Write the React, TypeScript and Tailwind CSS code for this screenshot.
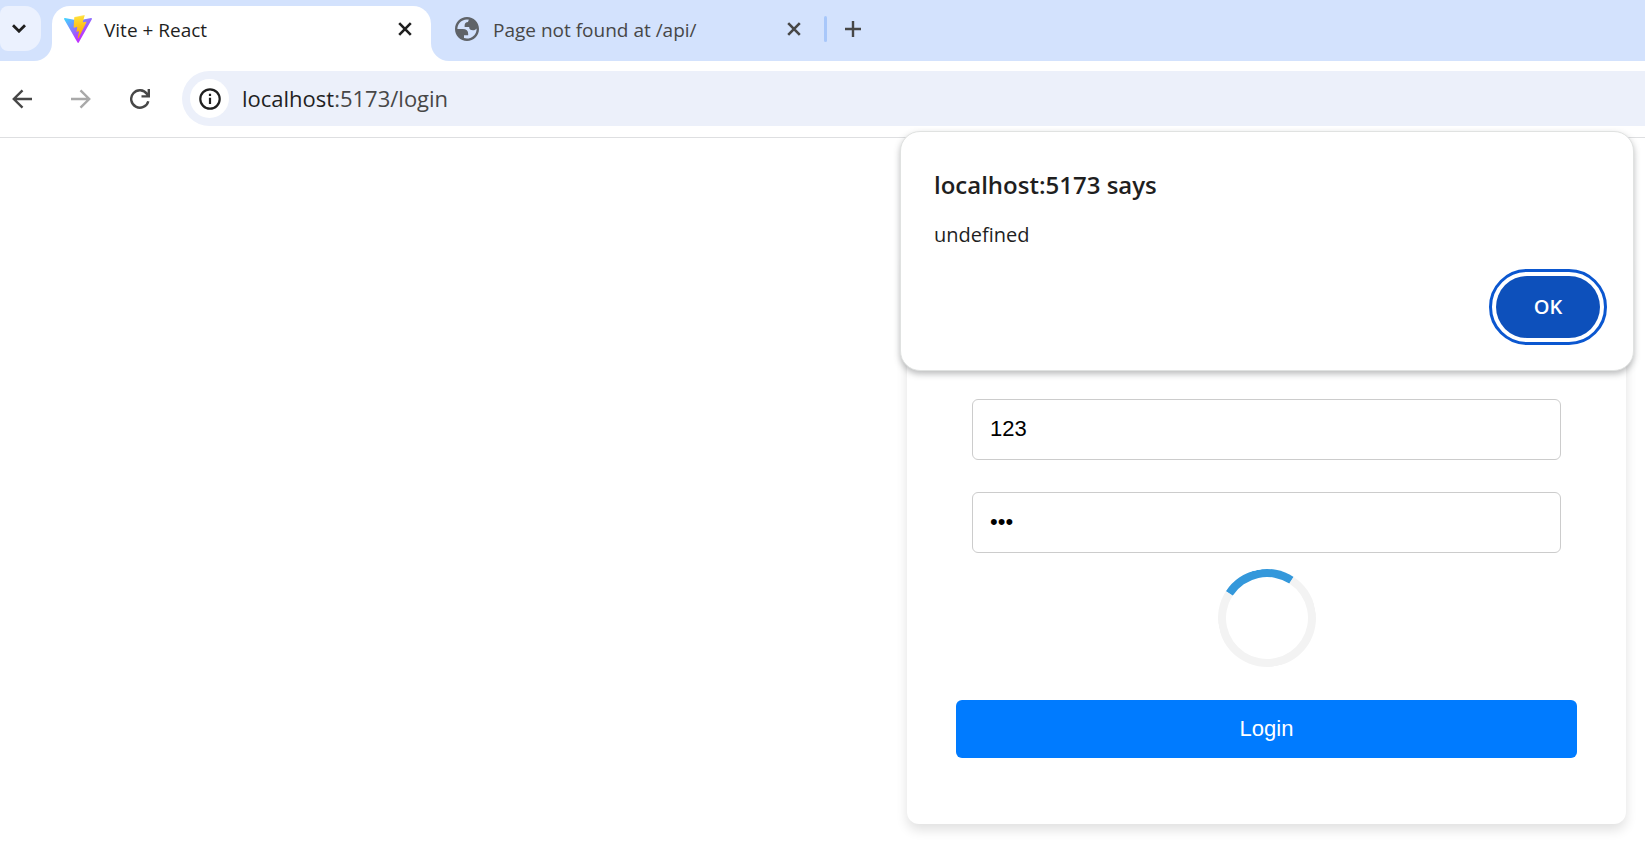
import type { ReactNode } from "react";

function CloseIcon() {
  return (
    <svg width="14" height="14" viewBox="0 0 14 14" fill="none" stroke="currentColor" strokeWidth="2.6">
      <path d="M1.2 1.2 12.8 12.8M12.8 1.2 1.2 12.8" />
    </svg>
  );
}

function ViteIcon() {
  return (
    <svg width="28" height="28" viewBox="0 0 256 257" className="shrink-0">
      <defs>
        <linearGradient id="viteBody" x1="-.828%" x2="57.636%" y1="7.652%" y2="78.411%">
          <stop offset="0%" stopColor="#41D1FF" />
          <stop offset="100%" stopColor="#BD34FE" />
        </linearGradient>
        <linearGradient id="viteBolt" x1="43.376%" x2="50.316%" y1="2.242%" y2="89.03%">
          <stop offset="0%" stopColor="#FFEA83" />
          <stop offset="8.333%" stopColor="#FFDD35" />
          <stop offset="100%" stopColor="#FFA800" />
        </linearGradient>
      </defs>
      <path
        fill="url(#viteBody)"
        d="M255.153 37.938 134.897 252.976c-2.483 4.44-8.862 4.466-11.382.048L.875 37.958c-2.746-4.814 1.371-10.646 6.827-9.67l120.385 21.517a6.537 6.537 0 0 0 2.322-.004l117.867-21.483c5.438-.991 9.574 4.796 6.877 9.62Z"
      />
      <path
        fill="url(#viteBolt)"
        d="M185.432.063 96.44 17.501a3.268 3.268 0 0 0-2.634 3.014l-5.474 92.456a3.268 3.268 0 0 0 3.997 3.378l24.777-5.718c2.318-.535 4.413 1.507 3.936 3.838l-7.361 36.047c-.495 2.426 1.782 4.5 4.151 3.78l15.304-4.649c2.372-.72 4.652 1.36 4.15 3.788l-11.698 56.621c-.732 3.542 3.979 5.473 5.943 2.437l1.313-2.028 72.516-144.72c1.215-2.423-.88-5.186-3.54-4.672l-25.505 4.922c-2.396.462-4.435-1.77-3.759-4.114l16.646-57.705c.677-2.35-1.37-4.583-3.769-4.113Z"
      />
    </svg>
  );
}

function GlobeIcon() {
  return (
    <svg width="24" height="24" viewBox="2 2 20 20" className="shrink-0" fill="#5f6368">
      <path
        fillRule="evenodd"
        d="M12 2C6.48 2 2 6.48 2 12s4.48 10 10 10 10-4.48 10-10S17.52 2 12 2zM4 12h4.4c3.407.022 4.922 1.73 4.543 5.127H9.488v2.470a8.004 8.004 0 0 0 10.498-8.083C19.327 12.504 18.332 13 17 13c-2.137 0-3.206-.916-3.206-2.750h-3.748c-.274-2.728.683-4.092 2.870-4.092 0-.975.327-1.597.811-1.970A8.004 8.004 0 0 0 4 12z"
      />
    </svg>
  );
}

function ArrowIcon({ forward = false }: { forward?: boolean }) {
  return (
    <svg width="20" height="20" viewBox="0 0 20 20" fill="none" stroke="currentColor" strokeWidth="2.4">
      {forward ? <path d="M0 10H18M9.5 1.3 18.2 10 9.5 18.7" /> : <path d="M20 10H2M10.5 1.3 1.8 10 10.5 18.7" />}
    </svg>
  );
}

function ReloadIcon() {
  return (
    <svg width="20" height="20" viewBox="0 0 20 20" fill="none" stroke="currentColor" strokeWidth="2.4">
      <path d="M18.3 12.2A8.7 8.7 0 1 1 17 5L18.4 7.2M18.8 0V7.4H11.5" />
    </svg>
  );
}

function InfoIcon() {
  return (
    <svg width="22" height="22" viewBox="0 0 22 22" fill="none" stroke="#1f1f1f" strokeWidth="2.2">
      <circle cx="11" cy="11" r="9.7" />
      <path d="M11 9.8V16M11 5.8V8" />
    </svg>
  );
}

function NavButton({ label, className, children }: { label: string; className: string; children: ReactNode }) {
  return (
    <button type="button" aria-label={label} className={`flex size-10 items-center justify-center ${className}`}>
      {children}
    </button>
  );
}

function TabStrip() {
  return (
    <div className="flex h-[61px] bg-white">
      <div className="w-[52px] shrink-0 rounded-br-[18px] bg-[#d3e2fd] pt-[6px]">
        <button
          type="button"
          aria-label="Search tabs"
          className="flex h-[45px] w-[41px] items-center justify-center rounded-r-2xl rounded-l-lg bg-[#ebf1fe] pr-1 text-[#1f1f1f]"
        >
          <svg width="14" height="9" viewBox="0 0 14 9" fill="none" stroke="currentColor" strokeWidth="2.8">
            <path d="m1 1.2 6 6 6-6" />
          </svg>
        </button>
      </div>
      <div className="w-[379px] shrink-0 bg-[#d3e2fd] pt-[6px]">
        <div className="flex h-[55px] items-start rounded-t-[18px] bg-white px-3 pt-[9px] text-[#1f1f1f]">
          <ViteIcon />
          <span className="ml-3 flex-1 text-[19px] leading-[30px]">Vite + React</span>
          <button type="button" aria-label="Close tab" className="flex size-7 items-center justify-center">
            <CloseIcon />
          </button>
        </div>
      </div>
      <div className="flex min-w-0 flex-1 items-start rounded-bl-[18px] bg-[#d3e2fd] pt-[15px] pl-6 text-[#474747]">
        <div className="flex w-[353px] items-start">
          <div className="flex h-7 items-center">
            <GlobeIcon />
          </div>
          <span className="ml-[14px] flex-1 text-[19px] leading-[30px]">Page not found at /api/</span>
          <button type="button" aria-label="Close tab" className="flex size-7 items-center justify-center">
            <CloseIcon />
          </button>
        </div>
        <div className="mt-px ml-4 h-[26px] w-[3px] rounded-full bg-[#a8c7fa]" />
        <button type="button" aria-label="New tab" className="ml-3 flex size-7 items-center justify-center">
          <svg width="16" height="16" viewBox="0 0 16 16" stroke="currentColor" strokeWidth="2.4">
            <path d="M8 0V16M0 8H16" />
          </svg>
        </button>
      </div>
    </div>
  );
}

function Toolbar() {
  return (
    <div className="flex h-[77px] items-center border-b border-[#dedfe1] bg-white pb-px pl-[2px]">
      <NavButton label="Back" className="text-[#474747]">
        <ArrowIcon />
      </NavButton>
      <NavButton label="Forward" className="ml-[19px] text-[#a9a9a9]">
        <ArrowIcon forward />
      </NavButton>
      <NavButton label="Reload" className="ml-[19px] text-[#474747]">
        <ReloadIcon />
      </NavButton>
      <div className="ml-[22px] flex h-[55px] flex-1 items-center rounded-l-full bg-[#ecf0fa] pl-2">
        <button
          type="button"
          aria-label="View site information"
          className="flex size-[39px] items-center justify-center rounded-full bg-white"
        >
          <InfoIcon />
        </button>
        <a href="#login" className="ml-[13px] pb-px text-[22px] leading-8 text-[#474747]">
          <span className="text-[#1f1f1f]">localhost</span>:5173/login
        </a>
      </div>
    </div>
  );
}

function AlertDialog() {
  return (
    <div
      role="alertdialog"
      aria-labelledby="alert-title"
      aria-describedby="alert-message"
      className="absolute -top-[7px] right-[11px] z-10 w-[734px] rounded-[20px] border border-[#e0e2e1] bg-white px-[33px] pt-9 pb-8 shadow-[0_3px_6px_rgba(60,64,67,0.35)]"
    >
      <h1 id="alert-title" className="text-2xl leading-[34px] font-semibold text-[#1f1f1f]">
        localhost:5173 says
      </h1>
      <p id="alert-message" className="mt-4 text-xl leading-[34px] text-[#1f1f1f]">
        undefined
      </p>
      <div className="mt-6 flex justify-end">
        <button
          type="button"
          className="h-[62px] w-[104px] rounded-full bg-[#0d50bb] text-xl font-semibold text-white outline-3 outline-offset-4 outline-[#0b57d0]"
        >
          OK
        </button>
      </div>
    </div>
  );
}

function LoginForm() {
  const field =
    "h-[61px] w-full rounded-md border border-[#cccccc] bg-white px-[17px] pb-[2px] text-[22px] text-black outline-none";
  return (
    <form
      onSubmit={(event) => event.preventDefault()}
      className="mt-28 mr-[19px] w-[719px] rounded-xl bg-white px-[49px] pt-[149px] pb-[66px] font-['Liberation_Sans',Arial,sans-serif] shadow-[0_6px_12px_rgba(0,0,0,0.12)]"
    >
      <div className="flex flex-col gap-8 px-4">
        <input aria-label="Username" type="text" defaultValue="123" className={field} />
        <input aria-label="Password" type="password" defaultValue="123" className={field} />
      </div>
      <div className="mt-4 flex justify-center">
        <div
          role="status"
          aria-label="Loading"
          className="size-[98px] -rotate-12 rounded-full border-8 border-[#f3f3f3] border-t-[#3498db]"
        />
      </div>
      <button type="submit" className="mt-[33px] h-[58px] w-full rounded-md bg-[#007bff] pb-[2px] text-[22px] text-white">
        Login
      </button>
    </form>
  );
}

export default function App() {
  return (
    <div className="min-h-screen overflow-x-hidden bg-white font-['Open_Sans','Noto_Sans',sans-serif]">
      <header>
        <TabStrip />
        <Toolbar />
      </header>
      <main className="relative flex justify-end">
        <AlertDialog />
        <LoginForm />
      </main>
    </div>
  );
}
